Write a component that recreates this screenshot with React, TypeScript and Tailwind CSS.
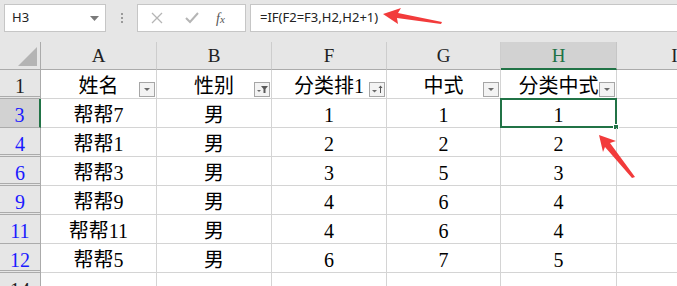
import React from 'react';

const serif = '"Liberation Serif", "Noto Sans CJK SC", serif';
const sans = '"Noto Sans", "Liberation Sans", "Noto Sans CJK SC", sans-serif';

type Row = { n: number; cells: string[]; gapAfter?: boolean };

const rows: Row[] = [
  { n: 3, cells: ['帮帮7', '男', '1', '1', '1'] },
  { n: 4, cells: ['帮帮1', '男', '2', '2', '2'], gapAfter: true },
  { n: 6, cells: ['帮帮3', '男', '3', '5', '3'], gapAfter: true },
  { n: 9, cells: ['帮帮9', '男', '4', '6', '4'], gapAfter: true },
  { n: 11, cells: ['帮帮11', '男', '4', '6', '4'] },
  { n: 12, cells: ['帮帮5', '男', '6', '7', '5'], gapAfter: true },
];

const cols = ['A', 'B', 'F', 'G', 'H', 'I'];
const headers = ['姓名', '性别', '分类排1', '中式', '分类中式'];

function FilterButton({ kind }: { kind: 'down' | 'funnel' | 'sort' }) {
  return (
    <div className="absolute right-[1px] bottom-[1px] flex h-[15px] w-[16px] items-center justify-center border border-[#a6a6a6] bg-[#f3f3f3]">
      <svg width="14" height="13" viewBox="0 0 14 13">
        {kind === 'down' && <polygon points="4,5 10,5 7,8" fill="#6b6b6b" />}
        {kind === 'funnel' && (
          <>
            <polygon points="2,7 6,7 4,9" fill="#6b6b6b" />
            <polygon points="6,3 13,3 10.5,6 10.5,10 8.5,10 8.5,6" fill="#595959" />
          </>
        )}
        {kind === 'sort' && (
          <>
            <polygon points="2,7 7,7 4.5,9.5" fill="#6b6b6b" />
            <line x1="10.5" y1="3" x2="10.5" y2="10" stroke="#595959" strokeWidth="1" />
            <polygon points="8.5,5 12.5,5 10.5,2.5" fill="#595959" />
          </>
        )}
      </svg>
    </div>
  );
}

function CellText({ children }: { children: React.ReactNode }) {
  return (
    <div
      className="flex h-full items-end justify-center text-[20px] leading-[24px] text-black"
      style={{ fontFamily: serif }}
    >
      {children}
    </div>
  );
}

export default function App() {
  return (
    <div className="relative h-[286px] w-[677px] overflow-hidden bg-white">
      {/* formula bar */}
      <div className="flex h-[42px] items-start bg-[#e6e6e6] pt-[4px]" style={{ fontFamily: sans }}>
        <div className="ml-[4px] flex h-[28px] w-[102px] items-center justify-between border border-[#c6c6c6] bg-white pl-[7px] pr-[6px] text-[13px] text-[#222]">
          <span>H3</span>
          <svg width="9" height="5" viewBox="0 0 9 5">
            <polygon points="0,0 9,0 4.5,5" fill="#7a7a7a" />
          </svg>
        </div>
        <div className="flex h-[28px] w-[31px] flex-col items-center justify-center gap-[2px]">
          <span className="h-[2px] w-[2px] bg-[#9a9a9a]" />
          <span className="h-[2px] w-[2px] bg-[#9a9a9a]" />
          <span className="h-[2px] w-[2px] bg-[#9a9a9a]" />
        </div>
        <div className="flex h-[28px] w-[109px] items-center border border-[#c6c6c6] bg-white">
          <svg className="ml-[13px]" width="12" height="12" viewBox="0 0 12 12">
            <path d="M1,1 L11,11 M11,1 L1,11" stroke="#b5b5b5" strokeWidth="1.3" />
          </svg>
          <svg className="ml-[22px]" width="14" height="12" viewBox="0 0 14 12">
            <path d="M1,6 L5,10 L13,1" stroke="#b5b5b5" strokeWidth="2" fill="none" />
          </svg>
          <span
            className="ml-[17px] text-[14px] italic text-[#555]"
            style={{ fontFamily: serif }}
          >
            f<span className="text-[11px]">x</span>
          </span>
        </div>
        <div className="ml-[4px] flex h-[28px] flex-1 items-center border-y border-l border-[#c6c6c6] bg-white pl-[9px] text-[13px] text-[#222]">
          =IF(F2=F3,H2,H2+1)
        </div>
      </div>

      {/* sheet */}
      <div
        className="grid grid-cols-[41px_116px_115px_115px_114px_116px_116px] grid-rows-[28px_repeat(8,29px)]"
        style={{ fontFamily: serif }}
      >
        {/* column headers */}
        <div className="relative border-r border-b border-[#ababab] bg-[#e6e6e6]">
          <svg className="absolute left-[18px] top-[5px]" width="20" height="20" viewBox="0 0 20 20">
            <polygon points="19,0 19,19 0,19" fill="#b4b4b4" />
          </svg>
        </div>
        {cols.map((c) => (
          <div
            key={c}
            className={`flex items-center justify-center pt-[2px] text-[19px] ${
              c === 'H'
                ? 'border-r border-b-2 border-r-[#c6c6c6] border-b-[#217346] bg-[#d2d2d2] text-[#217346]'
                : 'border-r border-b border-r-[#cdcdcd] border-b-[#ababab] bg-[#e6e6e6] text-[#222]'
            }`}
          >
            {c}
          </div>
        ))}

        {/* row 1 */}
        <div className="flex items-end justify-center border-r border-b border-[#ababab] bg-[#e6e6e6] text-[20px] leading-[24px] text-[#222] shadow-[inset_0_-1px_0_#e6e6e6,inset_0_-2px_0_#ababab]">
          1
        </div>
        {headers.map((h, i) => (
          <div key={h} className="relative border-r border-b border-[#d4d4d4]">
            <CellText>{h}</CellText>
            <FilterButton kind={i === 1 ? 'funnel' : i === 2 ? 'sort' : 'down'} />
          </div>
        ))}
        <div className="border-r border-b border-[#d4d4d4]" />

        {/* data rows */}
        {rows.map((r) => (
          <React.Fragment key={r.n}>
            <div
              className={`flex items-end justify-center border-b border-b-[#ababab] text-[20px] leading-[24px] text-[#1a1aff] ${
                r.n === 3 ? 'border-r-2 border-r-[#217346] bg-[#d2d2d2]' : 'border-r border-r-[#ababab] bg-[#e6e6e6]'
              } ${r.gapAfter ? 'shadow-[inset_0_-1px_0_#e6e6e6,inset_0_-2px_0_#ababab]' : ''}`}
            >
              {r.n}
            </div>
            {r.cells.map((v, i) => (
              <div key={i} className="relative border-r border-b border-[#d4d4d4]">
                <CellText>{v}</CellText>
                {r.n === 3 && i === 4 && (
                  <div className="absolute -top-[1px] -left-[1px] -right-[1px] -bottom-[1px] border-2 border-[#217346]">
                    <div className="absolute -right-[4px] -bottom-[4px] h-[6px] w-[6px] border border-white bg-[#217346]" />
                  </div>
                )}
              </div>
            ))}
            <div className="border-r border-b border-[#d4d4d4]" />
          </React.Fragment>
        ))}

        {/* row 14 */}
        <div className="flex items-end justify-center border-r border-[#ababab] bg-[#e6e6e6] pt-[4px] text-[20px] leading-[24px] text-[#222]">
          14
        </div>
        {[0, 1, 2, 3, 4, 5].map((i) => (
          <div key={i} className="border-r border-[#d4d4d4]" />
        ))}
      </div>

      {/* annotation arrows */}
      <svg className="pointer-events-none absolute left-0 top-0" width="677" height="286" viewBox="0 0 677 286">
        <polygon points="383,14 401,8 398,13 442,22 441,24 397,18 398,24" fill="#f23b3b" />
        <polygon points="599,135 616,141 610,143 635,177 632,178 605,147 603,152" fill="#f23b3b" />
      </svg>
    </div>
  );
}
